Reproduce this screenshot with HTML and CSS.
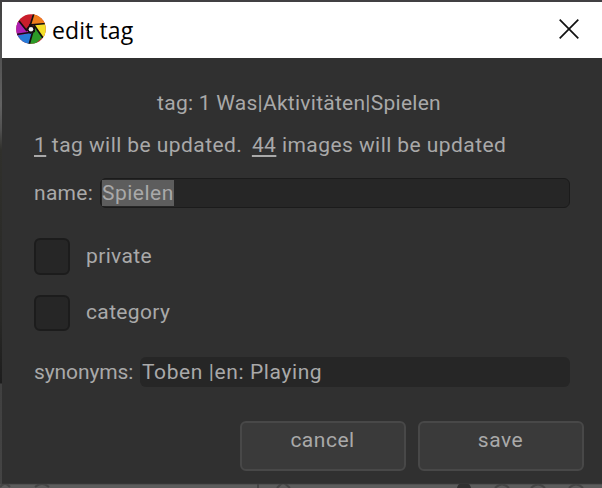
FILE: index.html
```html
<!DOCTYPE html>
<html lang="en">
<head>
<meta charset="utf-8">
<title>edit tag</title>
<link rel="stylesheet" href="styles.css">
</head>
<body>
<div class="backdrop">
  <div class="dialog">
    <header class="titlebar">
      <svg class="logo" viewBox="0 0 30 30" width="30" height="30">
        <defs><clipPath id="disc"><circle cx="15" cy="15" r="14.8"/></clipPath></defs>
        <g clip-path="url(#disc)">
          <rect width="30" height="30" fill="#c91d2b"/>
          <path d="M14 11L17-1H30V10L17 11Z" fill="#ef7d1c"/>
          <path d="M17 11L31 9V23L25 23L19 14Z" fill="#f3df29"/>
          <path d="M19 13L27 23L18 31H12L15 19Z" fill="#2c9a28"/>
          <path d="M17 18L13 31H5L0 20L12 18Z" fill="#277bd8"/>
          <path d="M14 19L0 22V8H4L11 16Z" fill="#ae20b2"/>
          <path d="M3 7L11 17M18-1L14 12M13 11L30 9.500M18 11L27 24M17 17L13 31M0 20.500L17 18" stroke="#160d10" stroke-width="1.700" fill="none"/>
          <path d="M14 10L19 13V18L14 20L10 15Z" fill="#160d10"/>
        </g>
        <circle cx="15" cy="15.300" r="2.300" fill="#f4f4f4"/>
      </svg>
      <h1 class="title">edit tag</h1>
      <svg class="close" viewBox="0 0 20 20" width="20" height="20"><path d="M.7.700L19.300 19.300M19.300.700L.7 19.300" stroke="#111" stroke-width="1.700"/></svg>
    </header>
    <main class="content">
      <p class="path">tag: 1 Was|Aktivitäten|Spielen</p>
      <p class="summary"><span class="count">1</span> tag will be updated. <span class="second"><span class="count">44</span> images will be updated</span></p>
      <div class="field name"><span class="label">name:</span><div class="entry framed"><span class="selected">Spielen</span></div></div>
      <div class="check private"><span class="box"></span><span class="caption">private</span></div>
      <div class="check category"><span class="box"></span><span class="caption">category</span></div>
      <div class="field synonyms"><span class="label">synonyms:</span><div class="entry"><span class="value">Toben |en: Playing</span></div></div>
      <div class="actions"><div class="button">cancel</div><div class="button">save</div></div>
    </main>
  </div>
  <svg class="strip" viewBox="0 0 602 4" width="602" height="4">
    <g fill="none" stroke="#454545" stroke-width="2">
      <path d="M0 3Q5-3 10 3M35 3Q42-3 49 3M258 0V4M277 4L283-2L290 4M495 4Q502-3 509 4M531 4Q538-3 545 4M569 4Q576-3 583 4"/>
      <path d="M457 4Q458 0 460 0H468Q470 0 471 4Z" fill="#303030" stroke="none"/>
    </g>
  </svg>
</div>
</body>
</html>
```
FILE: styles.css
```css
* { box-sizing: border-box; }
body { margin: 0; overflow: hidden; }
.backdrop {
  width: 602px;
  height: 488px;
  padding-top: 2px;
  background: linear-gradient(#414043 0 2px, #414141 2px, #626262 105px, #505050 130px, #30302c 150px, #282826 320px, #1d1d1d 383px, #404040 384px, #444 484px, #5c5c5c 485px);
}
.dialog {
  display: flex;
  flex-direction: column;
  height: 482px;
  margin-left: 2px;
  background: #303030;
  border-bottom: 1px solid #353535;
}
.titlebar {
  display: flex;
  align-items: center;
  height: 56px;
  padding: 0 23px 0 14px;
  background: #fff;
}
.logo { margin-top: -3px; }
.title {
  flex: 1;
  margin: 0 0 0 6px;
  font: 400 23px/32px "Open Sans", "Noto Sans", sans-serif;
  letter-spacing: .1px;
  color: #000;
}
.close { margin-top: -2px; }
.content {
  flex: 1;
  padding: 32px 18px 0 32px;
  color: #a9a9a9;
  font: 400 21px/26px Roboto, sans-serif;
  letter-spacing: .5px;
}
p { margin: 0; }
.path { padding-right: 20px; text-align: center; letter-spacing: .26px; }
.summary { margin-top: 16px; white-space: nowrap; letter-spacing: .43px; }
.second { margin-left: 4px; }
.count {
  text-decoration: underline;
  text-decoration-thickness: 2px;
  text-underline-offset: 3px;
  text-decoration-skip-ink: none;
}
.field { display: flex; align-items: center; margin-right: 14px; }
.entry {
  flex: 1;
  height: 30px;
  padding: 2px;
  border-radius: 6px;
  background: #262626;
}
.framed { padding: 1px; border: 1px solid #1b1b1b; }
.name { margin-top: 20px; }
.name .label { width: 66px; letter-spacing: .3px; }
.selected { display: inline-block; background: #5d5d5d; }
.check { display: flex; align-items: center; gap: 16px; }
.caption { padding-bottom: 2px; letter-spacing: .36px; }
.box {
  width: 36px;
  height: 37px;
  border: 2px solid #1c1c1c;
  border-radius: 6px;
  background: #262626;
}
.private { margin-top: 30px; }
.category { margin-top: 20px; }
.category .box { height: 36px; }
.synonyms { margin-top: 26px; }
.synonyms .label { width: 106px; letter-spacing: -.1px; }
.value { letter-spacing: .6px; }
.actions { display: flex; justify-content: flex-end; gap: 12px; margin-top: 34px; }
.button {
  width: 166px;
  height: 50px;
  padding: 4px 1px 0 0;
  border: 2px solid #484848;
  border-radius: 6px;
  background: #3a3a3a;
  text-align: center;
}
.strip { display: block; }
```
